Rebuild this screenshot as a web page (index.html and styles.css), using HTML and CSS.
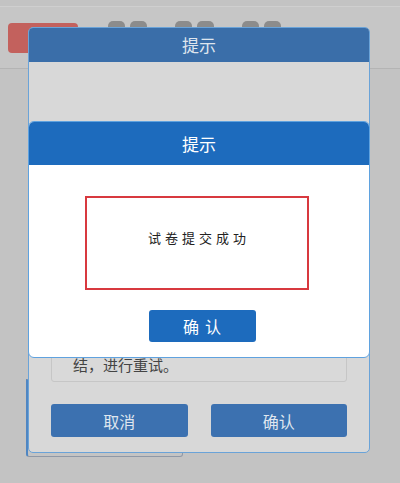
FILE: index.html
```html
<!DOCTYPE html>
<html lang="zh-CN">
<head>
<meta charset="utf-8">
<title>提示</title>
<link rel="stylesheet" href="styles.css">
</head>
<body>
<div class="page">
  <div class="topbar">
    <div class="red-btn"></div>
    <div class="tab-group"><span class="tab"></span><span class="tab"></span></div>
    <div class="tab-group"><span class="tab"></span><span class="tab"></span></div>
    <div class="tab-group"><span class="tab"></span><span class="tab"></span></div>
  </div>
  <div class="content">
    <div class="under-card"></div>
  </div>
</div>

<div class="dialog dialog-back">
  <div class="dlg-head back-head">提示</div>
  <div class="back-body">
    <div class="msg-box"><span class="msg-line">结，进行重试。</span></div>
    <div class="back-actions">
      <button class="back-btn">取消</button>
      <button class="back-btn">确认</button>
    </div>
  </div>
</div>

<div class="dialog dialog-front">
  <div class="dlg-head front-head">提示</div>
  <div class="front-body">
    <div class="result-box">试卷提交成功</div>
    <button class="ok-btn">确认</button>
  </div>
</div>
</body>
</html>
```

FILE: styles.css
```css
* { box-sizing: border-box; }
html, body { margin: 0; padding: 0; }
body {
  width: 400px;
  height: 483px;
  overflow: hidden;
  background: #c3c3c3;
  font-family: "Noto Sans CJK SC", "Noto Sans", sans-serif;
  position: relative;
}
.page { width: 400px; }
.topbar {
  margin-top: 6px;
  height: 63px;
  border-top: 1px solid #cfcfcf;
  border-bottom: 1px solid #b4b4b4;
  background: #c6c6c6;
  display: flex;
  align-items: flex-start;
  padding: 16px 0 0 8px;
  gap: 30px;
}
.red-btn {
  width: 70px;
  height: 30px;
  border-radius: 4px;
  background: #c3615d;
}
.tab-group {
  display: flex;
  gap: 5px;
  margin-top: -2px;
  margin-right: -2px;
}
.tab {
  width: 17px;
  height: 24px;
  border-radius: 5px;
  background: #8c8c8c;
}
.content { padding: 310px 0 0 26px; }
.under-card {
  width: 157px;
  height: 78px;
  border: 1px solid #8f98a6;
  border-left: 2px solid #4f86c2;
  border-radius: 0 0 3px 3px;
  background: #c4c4c4;
}

.dialog {
  position: absolute;
  left: 28px;
  width: 342px;
  overflow: hidden;
}
.dlg-head {
  text-align: center;
  font-size: 17px;
}
.dialog-back {
  top: 27px;
  height: 426px;
  border: 1px solid #6aa3d8;
  border-radius: 5px;
  background: #d8d8d8;
}
.back-head {
  height: 34px;
  line-height: 34px;
  background: #3a6ea9;
  color: #dfe5ee;
}
.back-body {
  padding: 68px 22px 15px;
}
.msg-box {
  height: 252px;
  border: 1px solid #c6c6c6;
  border-radius: 3px;
  background: #d9d9d9;
  display: flex;
  align-items: flex-end;
  padding: 0 0 6px 21px;
}
.msg-line {
  font-size: 15px;
  line-height: 20px;
  color: #444;
}
.back-actions {
  margin-top: 22px;
  display: flex;
  gap: 23px;
}
.back-btn {
  flex: 1;
  height: 33px;
  border: none;
  border-radius: 3px;
  background: #3c71b0;
  color: #dfe6ef;
  font-family: inherit;
  font-size: 16px;
  padding: 0;
}

.dialog-front {
  top: 121px;
  height: 237px;
  border: 1px solid #5fa2df;
  border-radius: 6px;
  background: #ffffff;
}
.front-head {
  height: 43px;
  line-height: 43px;
  background: #1d6bbd;
  color: #ffffff;
}
.front-body {
  display: flex;
  flex-direction: column;
  align-items: center;
  padding-top: 31px;
}
.result-box {
  width: 224px;
  height: 94px;
  margin-right: 4px;
  border: 2px solid #d8393f;
  display: flex;
  align-items: center;
  justify-content: center;
  font-size: 13px;
  letter-spacing: 4px;
  padding: 0 0 12px 4px;
  color: #222;
}
.ok-btn {
  margin-top: 20px;
  width: 107px;
  height: 32px;
  border: none;
  border-radius: 3px;
  background: #1d6bbd;
  color: #ffffff;
  font-family: inherit;
  font-size: 16px;
  letter-spacing: 6px;
  padding: 0 0 0 6px;
  margin-left: 6px;
}
```
